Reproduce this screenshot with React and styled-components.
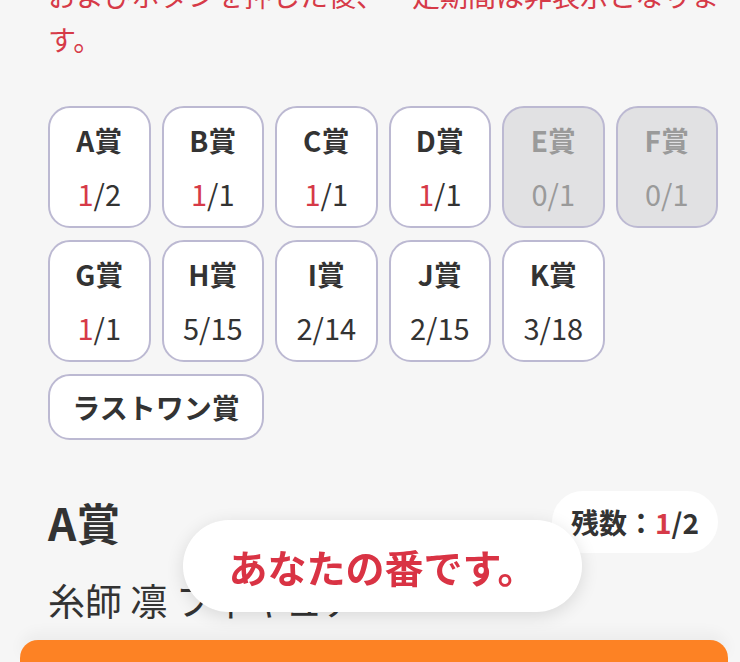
import React from "react";
import styled, { createGlobalStyle } from "styled-components";

const GlobalStyle = createGlobalStyle`
  html, body {
    margin: 0;
    padding: 0;
    background: #f6f6f6;
    font-family: "Noto Sans CJK JP", "Noto Sans", sans-serif;
    color: #333;
    overflow: hidden;
  }
`;

const Page = styled.div`
  height: 662px;
  overflow: hidden;
  display: flex;
  flex-direction: column;
`;

const Content = styled.div`
  padding: 0 22px 0 48px;
  flex: 1;
`;

const Notice = styled.p`
  margin: -27px -20px 0 0;
  font-size: 28px;
  line-height: 44px;
  color: #d63a48;
`;

const Grid = styled.div`
  margin-top: 45px;
  display: grid;
  grid-template-columns: repeat(6, 1fr);
  column-gap: 11px;
  row-gap: 12px;
`;

const Card = styled.div`
  box-sizing: border-box;
  height: ${(p) => (p.$wide ? "66px" : "122px")};
  grid-column: ${(p) => (p.$wide ? "span 2" : "auto")};
  border: 2px solid #bcb9d2;
  border-radius: 22px;
  background: ${(p) => (p.$off ? "#e1e1e3" : "#fff")};
  display: flex;
  flex-direction: column;
  align-items: center;
  justify-content: ${(p) => (p.$wide ? "center" : "flex-start")};
  padding-top: ${(p) => (p.$wide ? "0" : "16px")};
`;

const Label = styled.div`
  font-size: 28px;
  line-height: 32px;
  font-weight: 700;
  color: ${(p) => (p.$off ? "#9a9a9a" : "#333")};
`;

const Count = styled.div`
  margin-top: 21px;
  font-size: 29px;
  line-height: 32px;
  color: ${(p) => (p.$off ? "#9a9a9a" : "#333")};
`;

const Hit = styled.span`
  color: #d63a48;
`;

const HeadRow = styled.div`
  margin-top: 51px;
  display: flex;
  align-items: center;
  justify-content: space-between;
`;

const Title = styled.h2`
  margin: 0;
  font-size: 44px;
  font-weight: 700;
  line-height: 1;
  color: #333;
`;

const Badge = styled.div`
  height: 62px;
  width: 166px;
  box-sizing: border-box;
  border-radius: 31px;
  background: #fff;
  display: flex;
  align-items: center;
  justify-content: center;
  font-size: 28px;
  font-weight: 700;
  color: #333;
`;

const Name = styled.div`
  margin-top: 23px;
  font-size: 37px;
  line-height: 48px;
  color: #333;
`;

const BottomBar = styled.div`
  margin: 0 12px 0 20px;
  height: 22px;
  background: #fd8224;
  border-radius: 18px 18px 0 0;
  box-shadow: 0 -8px 14px rgba(0, 0, 0, 0.04);
  flex-shrink: 0;
`;

const Toast = styled.div`
  position: fixed;
  left: 183px;
  top: 520px;
  width: 399px;
  height: 92px;
  border-radius: 46px;
  background: #fff;
  box-shadow: 0 4px 18px rgba(0, 0, 0, 0.12);
  display: flex;
  align-items: center;
  justify-content: center;
  font-size: 39px;
  font-weight: 700;
  color: #d93344;
`;

const prizes = [
  { name: "A賞", hit: 1, total: 2 },
  { name: "B賞", hit: 1, total: 1 },
  { name: "C賞", hit: 1, total: 1 },
  { name: "D賞", hit: 1, total: 1 },
  { name: "E賞", left: 0, total: 1, off: true },
  { name: "F賞", left: 0, total: 1, off: true },
  { name: "G賞", hit: 1, total: 1 },
  { name: "H賞", left: 5, total: 15 },
  { name: "I賞", left: 2, total: 14 },
  { name: "J賞", left: 2, total: 15 },
  { name: "K賞", left: 3, total: 18 },
];

export default function App() {
  return (
    <Page>
      <GlobalStyle />
      <Content>
        <Notice>
          およびボタンを押した後、一定期間は非表示となります。
        </Notice>
        <Grid>
          {prizes.map((p) => (
            <Card key={p.name} $off={p.off}>
              <Label $off={p.off}>{p.name}</Label>
              <Count $off={p.off}>
                {p.hit ? <Hit>{p.hit}</Hit> : p.left}/{p.total}
              </Count>
            </Card>
          ))}
          <Card $wide>
            <Label>ラストワン賞</Label>
          </Card>
        </Grid>
        <HeadRow>
          <Title>A賞</Title>
          <Badge>
            残数：<Hit>1</Hit>/2
          </Badge>
        </HeadRow>
        <Name>糸師 凛 フィギュア</Name>
      </Content>
      <BottomBar />
      <Toast>あなたの番です。</Toast>
    </Page>
  );
}
